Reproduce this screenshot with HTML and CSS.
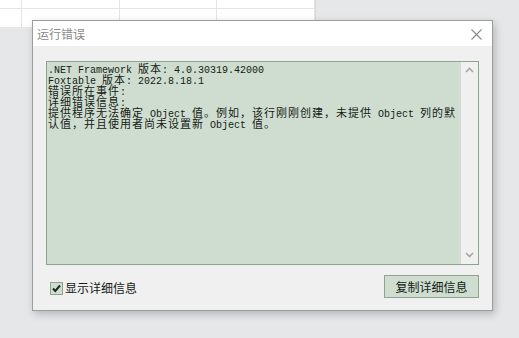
FILE: index.html
```html
<!DOCTYPE html>
<html>
<head>
<meta charset="utf-8">
<link rel="stylesheet" href="styles.css">
</head>
<body>
<div class="sheet">
  <div class="row"><div class="cell c0"></div><div class="cell"></div><div class="cell"></div><div class="cell"></div></div>
  <div class="row last"><div class="cell c0"></div><div class="cell"></div><div class="cell"></div><div class="cell"></div></div>
</div>
<div class="dialog">
  <div class="titlebar">
    <span class="title">运行错误</span>
    <svg class="close" width="11" height="11" viewBox="0 0 11 11"><path d="M0.5 0.5L10.5 10.5M10.5 0.5L0.5 10.5" stroke="#8a8a8a" stroke-width="1.1" fill="none"/></svg>
  </div>
  <div class="content">
    <div class="box">
      <div class="text">
        <div class="ln">.NET Framework <span class="cj">版本</span>: 4.0.30319.42000</div>
        <div class="ln">Foxtable <span class="cj">版本</span>: 2022.8.18.1</div>
        <div class="ln"><span class="cj">错误所在事件</span>:</div>
        <div class="ln"><span class="cj">详细错误信息</span>:</div>
        <div class="ln"><span class="cj">提供程序无法确定</span> Object <span class="cj">值。例如，该行刚刚创建，未提供</span> Object <span class="cj">列的默</span></div>
        <div class="ln"><span class="cj">认值，并且使用者尚未设置新</span> Object <span class="cj">值。</span></div>
      </div>
      <div class="scroll">
        <svg width="17" height="12" viewBox="0 0 17 12"><path d="M5 8L8.5 4.5L12 8" stroke="#a6a6a6" stroke-width="1.6" fill="none"/></svg>
        <svg width="17" height="12" viewBox="0 0 17 12"><path d="M5 4L8.5 7.5L12 4" stroke="#a6a6a6" stroke-width="1.6" fill="none"/></svg>
      </div>
    </div>
    <div class="footer">
      <label class="check">
        <span class="cbox"><svg width="11" height="11" viewBox="0 0 11 11"><path d="M2 5.5L4.3 8L9 2.5" stroke="#1c2a1c" stroke-width="2" fill="none"/></svg></span>
        <span class="clabel">显示详细信息</span>
      </label>
      <div class="btn">复制详细信息</div>
    </div>
  </div>
</div>
</body>
</html>
```

FILE: styles.css
```css
html, body {
  margin: 0;
  padding: 0;
}
body {
  width: 519px;
  height: 338px;
  background: #e6e7e9;
  position: relative;
  overflow: hidden;
  font-family: "Noto Sans CJK SC", "Noto Sans", sans-serif;
}
.sheet {
  width: 316px;
  background: #ffffff;
  border-right: 1px solid #d8d8d8;
  box-sizing: border-box;
}
.row {
  display: flex;
  height: 8px;
  border-bottom: 1px solid #e4e4e4;
}
.row.last {
  height: 18px;
  border-bottom: none;
}
.cell {
  width: 98px;
  border-right: 1px solid #e4e4e4;
  box-sizing: border-box;
}
.cell.c0 {
  width: 22px;
}
.dialog {
  position: absolute;
  left: 32px;
  top: 20px;
  width: 461px;
  height: 291px;
  box-sizing: border-box;
  border: 1px solid #9c9c9c;
  background: #f0f0f0;
  box-shadow: 2px 3px 8px rgba(0, 0, 0, 0.22);
  display: flex;
  flex-direction: column;
}
.titlebar {
  height: 25px;
  background: #ffffff;
  display: flex;
  align-items: center;
  justify-content: space-between;
  padding: 0 10px 0 4px;
}
.title {
  font-size: 12px;
  color: #8a8a8a;
  line-height: 13px;
  margin-top: -1px;
}
.close {
  margin-top: 2px;
}
.content {
  flex: 1;
  padding: 15px 13px 12px 13px;
  display: flex;
  flex-direction: column;
}
.box {
  height: 204px;
  box-sizing: border-box;
  border: 1px solid #8fa48f;
  background: #cfddd0;
  display: flex;
}
.text {
  flex: 1;
  padding: 1px 0 0 1px;
  font-family: "Liberation Mono", "Noto Sans CJK SC", monospace;
  font-size: 10px;
  color: #142014;
}
.ln {
  height: 11px;
  line-height: 11px;
  white-space: nowrap;
}
.cj {
  font-family: "Noto Sans CJK SC", sans-serif;
  font-size: 11px;
  letter-spacing: 1px;
  line-height: 11px;
}
.scroll {
  width: 17px;
  background: #f0f0f0;
  display: flex;
  flex-direction: column;
  justify-content: space-between;
  padding: 2px 0 3px 0;
}
.scroll svg {
  display: block;
}
.footer {
  flex: 1;
  display: flex;
  align-items: flex-end;
  justify-content: space-between;
}
.check {
  display: flex;
  align-items: center;
  margin: 0 0 3px 4px;
}
.cbox {
  width: 13px;
  height: 13px;
  box-sizing: border-box;
  border: 1px solid #8fa48f;
  background: #cfddd0;
  display: flex;
  align-items: center;
  justify-content: center;
}
.clabel {
  font-size: 12px;
  line-height: 15px;
  color: #142014;
  margin-left: 2px;
  margin-top: -1px;
}
.btn {
  width: 95px;
  height: 23px;
  box-sizing: border-box;
  border: 1px solid #8fa48f;
  background: #cfddd0;
  font-size: 12px;
  color: #142014;
  display: flex;
  align-items: center;
  justify-content: center;
  line-height: 13px;
}
```
